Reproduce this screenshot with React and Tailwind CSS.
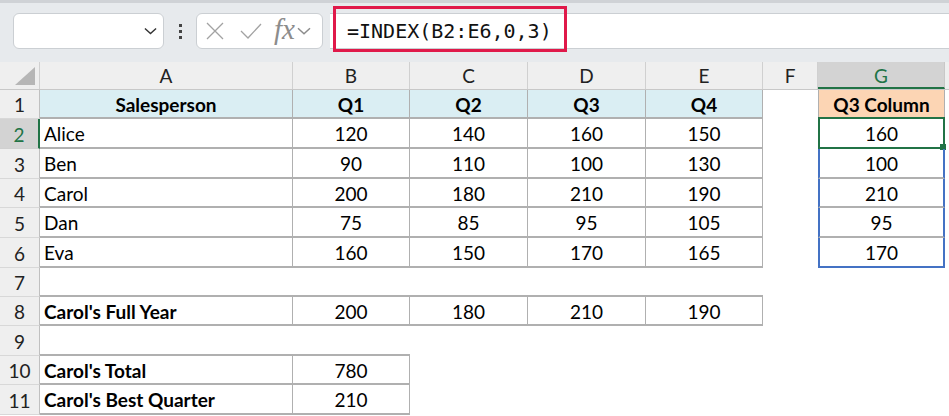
import React from "react";

const W = [
  "w-[253px]",
  "w-[117px]",
  "w-[118px]",
  "w-[118px]",
  "w-[117px]",
  "w-[55px]",
  "w-[127px]",
];

const LINE = "border-[#b0b0b0]";

const head = (t) => ({ t, c: `bg-[#daeef3] font-bold justify-center border-r border-b-2 ${LINE}` });
const label = (t, bold) => ({ t, c: `${bold ? "font-bold " : ""}justify-start pl-[4px] border-r border-b-2 ${LINE}` });
const num = (t) => ({ t, c: `justify-center border-r border-b-2 ${LINE}` });
const blank = { t: "", c: "" };
const under = { t: "", c: `border-b-2 ${LINE}` };
const gcol = (t, last) => ({
  t,
  c: `justify-center border-x-2 border-x-[#4472c4] border-b-2 ${last ? "border-b-[#4472c4]" : "border-b-[#b0b0b0]"}`,
});

const rows = [
  {
    n: 1,
    h: "h-[29px]",
    cells: [
      head("Salesperson"),
      head("Q1"),
      head("Q2"),
      head("Q3"),
      head("Q4"),
      blank,
      { t: "Q3 Column", c: `bg-[#fcd5b4] font-bold justify-center border-x border-b-2 ${LINE}` },
    ],
  },
  { n: 2, h: "h-[30px]", sel: true, cells: [label("Alice"), num("120"), num("140"), num("160"), num("150"), blank, gcol("160")] },
  { n: 3, h: "h-[30px]", cells: [label("Ben"), num("90"), num("110"), num("100"), num("130"), blank, gcol("100")] },
  { n: 4, h: "h-[29px]", cells: [label("Carol"), num("200"), num("180"), num("210"), num("190"), blank, gcol("210")] },
  { n: 5, h: "h-[30px]", cells: [label("Dan"), num("75"), num("85"), num("95"), num("105"), blank, gcol("95")] },
  { n: 6, h: "h-[30px]", cells: [label("Eva"), num("160"), num("150"), num("170"), num("165"), blank, gcol("170", true)] },
  { n: 7, h: "h-[29px]", cells: [under, under, under, under, under, blank, blank] },
  {
    n: 8,
    h: "h-[29px]",
    cells: [label("Carol's Full Year", true), num("200"), num("180"), num("210"), num("190"), blank, blank],
  },
  { n: 9, h: "h-[30px]", cells: [under, under, blank, blank, blank, blank, blank] },
  { n: 10, h: "h-[29px]", cells: [label("Carol's Total", true), num("780"), blank, blank, blank, blank, blank] },
  { n: 11, h: "h-[30px]", cells: [label("Carol's Best Quarter", true), num("210"), blank, blank, blank, blank, blank] },
];

const Chevron = ({ className }) => (
  <svg viewBox="0 0 14 8" className={className} fill="none" stroke="currentColor" strokeWidth="1.5">
    <path d="M1 1.2 L7 6.8 L13 1.2" />
  </svg>
);

const Toolbar = () => (
  <div className="h-[62px] bg-[#e7eaed] border-t-[3px] border-[#cfd2d6] flex items-start pt-[10px]">
    {/* name box */}
    <div className="ml-[13px] w-[151px] h-[36px] bg-white border border-[#cbcfd3] rounded-[6px] flex items-center justify-end pr-[6px]">
      <Chevron className="w-[13px] h-[8px] text-[#333]" />
    </div>
    {/* dots */}
    <div className="w-[32px] h-[36px] flex flex-col items-center justify-center gap-[3px]">
      <div className="w-[3px] h-[3px] bg-[#444]" />
      <div className="w-[3px] h-[3px] bg-[#444]" />
      <div className="w-[3px] h-[3px] bg-[#444]" />
    </div>
    {/* cancel / enter / fx */}
    <div className="w-[127px] h-[36px] bg-white border border-[#cbcfd3] rounded-[6px] flex items-center pl-[9px]">
      <svg viewBox="0 0 18 18" className="w-[18px] h-[18px]" fill="none" stroke="#a2a2a2" strokeWidth="1.3">
        <path d="M1 1 L17 17 M17 1 L1 17" />
      </svg>
      <svg viewBox="0 0 22 16" className="ml-[16px] w-[22px] h-[16px]" fill="none" stroke="#a2a2a2" strokeWidth="1.3">
        <path d="M1 8 L8 15 L21 1" />
      </svg>
      <span className="ml-[12px] font-['Liberation_Serif',serif] italic text-[29px] leading-none text-[#8c8c8c] -mt-[4px]">
        fx
      </span>
      <Chevron className="ml-[2px] w-[14px] h-[8px] text-[#8c8c8c]" />
    </div>
    {/* formula bar */}
    <div className="ml-[7px] flex-1 h-[36px] bg-white border-y border-[#cbcfd3] relative flex items-center pl-[17px]">
      <span className="font-['DejaVu_Sans_Mono',monospace] text-[20px] text-[#111] leading-none">=INDEX(B2:E6,0,3)</span>
      <div className="absolute left-[3px] -top-[8px] w-[234px] h-[46px] border-[3px] border-[#e0194a]" />
    </div>
  </div>
);

const ColHeader = () => (
  <div className="flex h-[28px] bg-[#efefef] border-b border-[#c8c8c8]">
    <div className="w-[40px] h-full border-r border-[#d0d0d0] flex items-end justify-end pr-[4px] pb-[4px]">
      <svg viewBox="0 0 20 18" className="w-[20px] h-[18px]">
        <path d="M20 0 L20 18 L0 18 Z" fill="#b6b6b6" />
      </svg>
    </div>
    {["A", "B", "C", "D", "E", "F", "G"].map((l, i) =>
      l === "G" ? (
        <div
          key={l}
          className={`${W[i]} h-full bg-[#d3d3d3] text-[#217346] border-r border-[#c8c8c8] border-b-2 border-b-[#217346] flex items-center justify-center pt-[3px]`}
        >
          {l}
        </div>
      ) : (
        <div key={l} className={`${W[i]} h-full border-r border-[#d0d0d0] flex items-center justify-center pt-[2px] text-[#222]`}>
          {l}
        </div>
      )
    )}
    <div className="flex-1" />
  </div>
);

export default function App() {
  return (
    <div className="w-[949px] h-[416px] overflow-hidden bg-white font-['Lato',sans-serif] text-[19px] text-black">
      <Toolbar />
      <ColHeader />
      {rows.map((r) => (
        <div key={r.n} className={`flex ${r.h}`}>
          <div
            className={
              r.sel
                ? "w-[40px] h-full bg-[#d3d3d3] text-[#217346] border-r-2 border-[#217346] border-b border-b-[#d0d0d0] flex items-center justify-center pt-[3px]"
                : "w-[40px] h-full bg-[#efefef] text-[#222] border-r border-[#c0c0c0] border-b border-b-[#d8d8d8] flex items-center justify-center pt-[3px]"
            }
          >
            {r.n}
          </div>
          {r.cells.map((c, i) => (
            <div key={i} className={`${W[i]} h-full flex items-center pt-[3px] relative ${c.c}`}>
              {c.t}
              {r.sel && i === 6 && (
                <div className="absolute -left-[2px] -top-[2px] -right-[2px] -bottom-[2px] border-2 border-[#217346]">
                  <div className="absolute -right-[3px] -bottom-[3px] w-[6px] h-[6px] bg-[#217346]" />
                </div>
              )}
            </div>
          ))}
          <div className="flex-1" />
        </div>
      ))}
    </div>
  );
}
